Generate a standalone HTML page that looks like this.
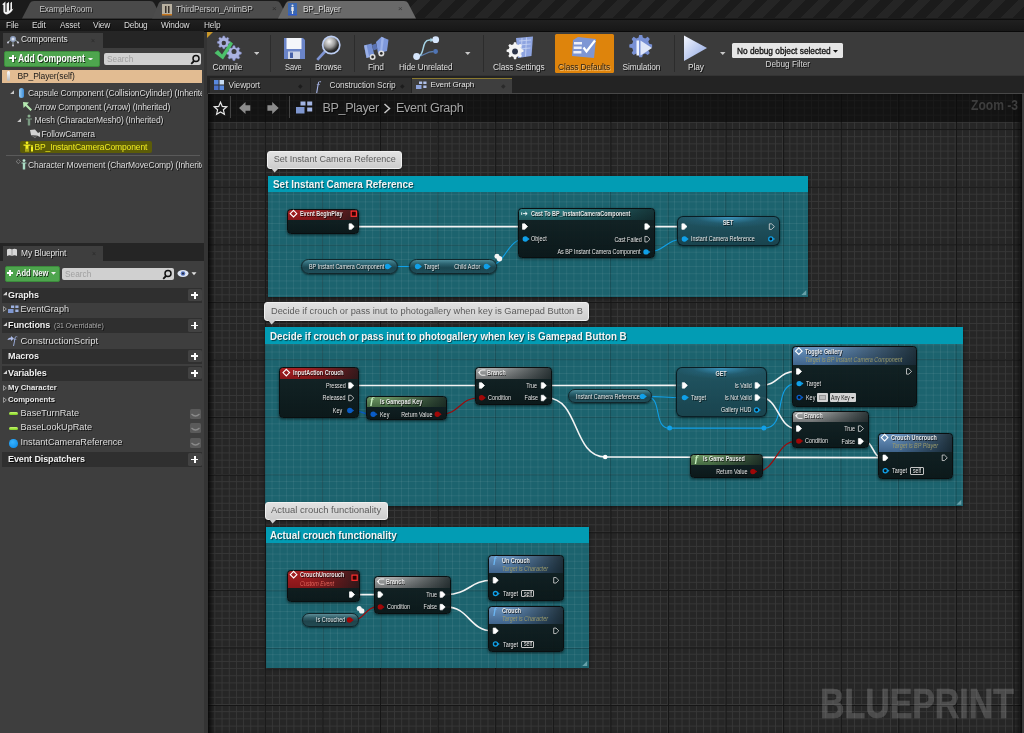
<!DOCTYPE html><html><head><meta charset="utf-8"><title>BP_Player</title><style>
*{box-sizing:border-box;margin:0;padding:0}
html,body{width:1024px;height:733px;overflow:hidden;background:#2b2b2b;font-family:"Liberation Sans",sans-serif;color:#d8d8d8;font-size:10px}
.a{position:absolute}
.t{position:absolute;white-space:nowrap;line-height:1;text-shadow:1px 1px 0 rgba(0,0,0,.75)}
.ns{text-shadow:none}
#topbar{left:0;top:0;width:1024px;height:19px;background:#1b1b1b}
#stripes{left:405px;top:0;width:619px;height:18px;background:repeating-linear-gradient(135deg,#1b1b1b 0 8.85px,#252525 8.85px 17.7px)}
#menubar{left:0;top:18.5px;width:1024px;height:13.5px;background:linear-gradient(#202020,#171717);border-top:1px solid #0e0e0e;border-bottom:1.2px solid #0a0a0a}
#left{left:0;top:31px;width:204px;height:702px;background:#3e3e3e}
#graph{left:208px;top:94px;width:813.5px;height:639px;overflow:hidden;background-color:#262626;box-shadow:inset 6px 0 5px -3px rgba(0,0,0,.8),inset -6px 0 5px -3px rgba(0,0,0,.8);
 background-image:
 linear-gradient(90deg,#151515 0 1.2px,transparent 1.2px),
 linear-gradient(180deg,#151515 0 1.2px,transparent 1.2px),
 linear-gradient(90deg,#373737 0 1px,transparent 1px),
 linear-gradient(180deg,#373737 0 1px,transparent 1px);
 background-size:57.6px 57.6px,57.6px 57.6px,7.2px 7.2px,7.2px 7.2px;
 background-position:-0.8px 0,0 35.1px,-0.8px 0,0 -0.9px}
</style></head><body>
<div id="root" style="position:absolute;left:0;top:0;width:1024px;height:733px;will-change:transform">
<!-- ===== top tab bar ===== -->
<div class="a" id="topbar"></div>
<div class="a" id="stripes"></div>
<svg class="a" style="left:0;top:0" width="430" height="19" viewBox="0 0 430 19">
  <path d="M22 18.5 L30 3 Q31 1 34 1 L150 1 Q153 1 154 3 L162 18.5 H22 Z" fill="#4a4a4a"/>
  <path d="M152 18.5 L158 5 Q159 1 163 1 L276 1 Q279 1 280 3 L288 18.5 Z" fill="#4c4c4c"/>
  <path d="M278 18.5 L286 3 Q287 1 290 1 L404 1 Q407 1 408 3 L416 18.5 Z" fill="#696969"/>
  <!-- UE logo -->
  <path d="M2.2 4.2 C3.6 3.4 4.6 2.4 5.4 1.6 L5.4 11.2 C5.4 12 6 12.4 6.6 11.8 L6.6 3.6 C7.4 3.2 8.4 2.4 9 1.8 L9 11 C9.6 10.6 10 10.2 10.4 9.6 L10.4 3 C11 2.6 11.6 2.2 12 1.8 L12 9.4 C12.6 9.2 13 8.8 13.4 8.4 C12.6 10.8 10.4 13.2 7 14.4 C5 14.2 3.4 13 3.4 11.4 L3.4 5 C3 4.8 2.6 4.6 2.2 4.2 Z" fill="#f2f2f2"/>
  <!-- anim bp icon -->
  <rect x="162" y="4" width="10" height="11" fill="#b8b0a0"/><rect x="162" y="14" width="10" height="1.5" fill="#c8761c"/>
  <path d="M165 6 h1.5 v7 h-1.5z M168 6 h1.5 v7 h-1.5z" fill="#3a332c"/>
  <!-- bp player icon -->
  <rect x="288" y="3" width="9" height="12" fill="#3a66b0"/><rect x="288" y="14" width="9" height="1.5" fill="#2d5bd0"/>
  <path d="M292.5 4.5 a1 1 0 1 1 0 2 a1 1 0 1 1 0 -2 M291.3 7 h2.4 v4 h-.6 v3 h-1.2 v-3 h-.6z" fill="#e8e8e8"/>
</svg>
<div class="t" style="left:39.5px;top:4.5px;font-size:8.3px;letter-spacing:-.18px;color:#c4c4c4">ExampleRoom</div>
<div class="t" style="left:176px;top:4.5px;font-size:8.3px;letter-spacing:-.18px;color:#cacaca">ThirdPerson_AnimBP</div>
<div class="t" style="left:303px;top:4.5px;font-size:8.3px;letter-spacing:-.18px;color:#dadada">BP_Player</div>
<div class="t ns" style="left:272px;top:5px;font-size:8px;color:#2c2c2c">×</div>
<div class="t ns" style="left:398px;top:5px;font-size:8px;color:#3c3c3c">×</div>

<!-- ===== menu bar ===== -->
<div class="a" id="menubar"></div>
<div class="t" style="left:6px;top:21px;font-size:8.3px;letter-spacing:-.18px;color:#dcdcdc">File</div>
<div class="t" style="left:32px;top:21px;font-size:8.3px;letter-spacing:-.18px;color:#dcdcdc">Edit</div>
<div class="t" style="left:60px;top:21px;font-size:8.3px;letter-spacing:-.18px;color:#dcdcdc">Asset</div>
<div class="t" style="left:93px;top:21px;font-size:8.3px;letter-spacing:-.18px;color:#dcdcdc">View</div>
<div class="t" style="left:124px;top:21px;font-size:8.3px;letter-spacing:-.18px;color:#dcdcdc">Debug</div>
<div class="t" style="left:161px;top:21px;font-size:8.3px;letter-spacing:-.18px;color:#dcdcdc">Window</div>
<div class="t" style="left:204px;top:21px;font-size:8.3px;letter-spacing:-.18px;color:#dcdcdc">Help</div>

<!-- ===== left panel ===== -->
<div class="a" id="left"></div>
<div class="a" style="left:0;top:31px;width:204px;height:17px;background:#252525"></div>
<div class="a" style="left:3px;top:33px;width:100px;height:15px;background:#3e3e3e"></div>
<svg class="a" style="left:6px;top:34px" width="14" height="13" viewBox="0 0 14 13"><circle cx="7" cy="5" r="3" fill="#8fa0c0"/><circle cx="7" cy="5" r="1.5" fill="#d8e0f0"/><path d="M2 8 l3-2 M12 8 l-3-2 M7 8 v3" stroke="#9aa" stroke-width="1"/><circle cx="2" cy="8.5" r="1" fill="#ccd"/><circle cx="12" cy="8.5" r="1" fill="#ccd"/><circle cx="7" cy="11.5" r="1" fill="#ccd"/></svg>
<div class="t" style="left:21px;top:35px;font-size:8.4px;letter-spacing:-.1px;color:#e0e0e0">Components</div>
<div class="t ns" style="left:91px;top:37px;font-size:7px;color:#2a2a2a">×</div>
<!-- add component -->
<div class="a" style="left:4px;top:51px;width:96px;height:16px;background:#4ea54e;border-radius:2px;border:1px solid #3b8b3b"></div>
<div class="a" style="left:9px;top:57.4px;width:7.4px;height:2.1px;background:#fff;box-shadow:1px 1px 0 rgba(0,0,0,.4)"></div><div class="a" style="left:11.65px;top:54.7px;width:2.1px;height:7.5px;background:#fff;box-shadow:1px 1px 0 rgba(0,0,0,.4)"></div><div class="t" style="left:18.3px;top:54px;font-size:10.4px;font-weight:bold;color:#fff;transform-origin:0 50%;transform:scaleX(.828)">Add Component</div><svg class="a" style="left:88.3px;top:57.6px" width="5" height="2.8" viewBox="0 0 5 2.8"><path d="M0 0 H5 L2.5 2.8Z" fill="#f0f0f0"/></svg>
<!-- search -->
<div class="a" style="left:104px;top:53px;width:97px;height:12px;background:#d0d0d0;border-radius:2px"></div>
<div class="t ns" style="left:107px;top:54.5px;font-size:8.3px;color:#a0a0a0">Search</div>
<svg class="a" style="left:190px;top:54px" width="11" height="11" viewBox="0 0 11 11"><circle cx="6" cy="4.5" r="3" fill="none" stroke="#111" stroke-width="1.5"/><path d="M4 7 L1.2 9.8" stroke="#111" stroke-width="1.8"/></svg>
<!-- self row -->
<div class="a" style="left:2px;top:70px;width:200px;height:13px;background:#e2bc92"></div>
<div class="a" style="left:7px;top:71px;width:3px;height:10px;background:linear-gradient(#fff,#bbb);border-radius:1.5px"></div>
<div class="t ns" style="left:17.5px;top:71.5px;font-size:8.5px;letter-spacing:-.12px;color:#1a1a1a">BP_Player(self)</div>
<!-- tree -->
<div class="a" style="left:0;top:86px;width:202px;height:90px;overflow:hidden">
<svg class="a" style="left:10.3px;top:4.2px" width="4.2" height="4.2" viewBox="0 0 4.2 4.2"><path d="M4.2 0 V4.2 H0Z" fill="#c8c8c8"/></svg>
<div class="a" style="left:19px;top:2px;width:5px;height:10px;border-radius:2.5px;background:linear-gradient(90deg,#9fd0f4,#3c8cd8)"></div>
<div class="t" style="left:28px;top:3px;font-size:8.5px;letter-spacing:-.12px;color:#dcdcdc">Capsule Component (CollisionCylinder) (Inherited)</div>
<svg class="a" style="left:22px;top:15px" width="11" height="10" viewBox="0 0 11 10"><path d="M1 1 L7 1.5 L5 3.5 L10 8.5 L8.5 10 L3.5 5 L1.5 7 Z" fill="#b4e8b0"/></svg>
<div class="t" style="left:34.5px;top:16.5px;font-size:8.5px;letter-spacing:-.12px;color:#dcdcdc">Arrow Component (Arrow) (Inherited)</div>
<svg class="a" style="left:17px;top:31.6px" width="4.2" height="4.2" viewBox="0 0 4.2 4.2"><path d="M4.2 0 V4.2 H0Z" fill="#c8c8c8"/></svg>
<svg class="a" style="left:25px;top:28px" width="8" height="12" viewBox="0 0 8 12"><circle cx="4" cy="2" r="1.5" fill="#8ab090"/><path d="M1 4.5 h6 v1 h-1.8 v6 h-2.4 v-6 h-1.8z" fill="#7a9a82"/></svg>
<div class="t" style="left:34.5px;top:30px;font-size:8.5px;letter-spacing:-.12px;color:#dcdcdc">Mesh (CharacterMesh0) (Inherited)</div>
<svg class="a" style="left:29px;top:43px" width="12" height="10" viewBox="0 0 12 10"><path d="M1 1 L6 0.5 L9 4 L11 3 L11 8 L8 6.5 L6 9 L2 6 Z" fill="#d4d4d4"/><path d="M2 6 L6 9 L8 6.5" fill="#555"/></svg>
<div class="t" style="left:41.5px;top:43.5px;font-size:8.5px;letter-spacing:-.12px;color:#dcdcdc">FollowCamera</div>
<div class="a" style="left:20px;top:55px;width:132px;height:12px;background:#5c5c08;border-radius:2px;filter:blur(.6px)"></div>
<svg class="a" style="left:23px;top:55px" width="11" height="11" viewBox="0 0 11 11"><circle cx="4" cy="1.8" r="1.4" fill="#f4f020"/><path d="M0.5 3.5 h7 v1.2 h-2 v6 h-1 v-3 h-1 v3 h-1 v-6 h-2z" fill="#f4f020"/><path d="M8 6 h2 v4.5 h-2z" fill="#f4f020"/><circle cx="9" cy="5" r=".9" fill="#f4f020"/></svg>
<div class="t ns" style="left:34.5px;top:57px;font-size:8.5px;letter-spacing:-.12px;color:#f0ec20">BP_InstantCameraComponent</div>
<div class="a" style="left:6px;top:68.7px;width:194px;height:1px;background:#5a5a5a"></div>
<div class="t ns" style="left:16px;top:72px;font-size:6px;color:#c0c0c0">◇</div>
<svg class="a" style="left:21px;top:73px" width="6" height="11" viewBox="0 0 6 11"><circle cx="3" cy="1.6" r="1.4" fill="#b8e8d0"/><path d="M0.5 3.6 h5 v1 h-1.3 v6 h-2.4 v-6 h-1.3z" fill="#a8dcc4"/></svg>
<div class="t" style="left:28px;top:75px;font-size:8.5px;letter-spacing:-.12px;color:#dcdcdc">Character Movement (CharMoveComp) (Inherited)</div>
</div>
<!-- ===== my blueprint panel ===== -->
<div class="a" style="left:0;top:242.5px;width:204px;height:18px;background:#252525"></div>
<div class="a" style="left:3px;top:246px;width:100px;height:15px;background:#3e3e3e"></div>
<svg class="a" style="left:7px;top:248px" width="10" height="9" viewBox="0 0 10 9"><path d="M0 1.5 Q2.5 0 5 1.5 Q7.5 0 10 1.5 L10 8 Q7.5 6.5 5 8 Q2.5 6.5 0 8 Z" fill="#d8d8d8"/><path d="M5 1.5 V8" stroke="#777" stroke-width=".6"/></svg>
<div class="t" style="left:21px;top:249px;font-size:8.4px;letter-spacing:-.1px;color:#e0e0e0">My Blueprint</div>
<div class="t ns" style="left:92px;top:250px;font-size:7px;color:#2a2a2a">×</div>
<div class="a" style="left:4.5px;top:265.5px;width:55.5px;height:16px;background:#4ea54e;border-radius:2px;border:1px solid #3b8b3b"></div>
<div class="a" style="left:7px;top:272.4px;width:6.2px;height:1.9px;background:#fff"></div><div class="a" style="left:9.15px;top:270.2px;width:1.9px;height:6.2px;background:#fff"></div><div class="t" style="left:16px;top:269px;font-size:9px;font-weight:bold;color:#f4f4f4;transform-origin:0 50%;transform:scaleX(.84)">Add New</div><svg class="a" style="left:50.5px;top:272.2px" width="5" height="2.8" viewBox="0 0 5 2.8"><path d="M0 0 H5 L2.5 2.8Z" fill="#f0f0f0"/></svg>
<div class="a" style="left:61.5px;top:267.5px;width:112.5px;height:12px;background:#d0d0d0;border-radius:2px"></div>
<div class="t ns" style="left:65px;top:269.5px;font-size:8.3px;color:#a0a0a0">Search</div>
<svg class="a" style="left:162px;top:268.5px" width="11" height="11" viewBox="0 0 11 11"><circle cx="6" cy="4.5" r="3" fill="none" stroke="#111" stroke-width="1.5"/><path d="M4 7 L1.2 9.8" stroke="#111" stroke-width="1.8"/></svg>
<svg class="a" style="left:177px;top:269px" width="22" height="9" viewBox="0 0 22 9"><ellipse cx="6" cy="4.5" rx="5.5" ry="3.4" fill="#dfe6f4"/><circle cx="6" cy="4.5" r="2.3" fill="#5878c0"/><circle cx="6" cy="4.5" r="1" fill="#223"/><path d="M14.5 3.3 h5 l-2.5 3z" fill="#e0e0e0"/></svg>
<div class="a" style="left:2px;top:287.5px;width:200px;height:15px;background:#2f2f2f"></div><div class="a" style="left:188px;top:288.5px;width:13.5px;height:12.5px;background:#424242;border-radius:1.5px"></div><div class="a" style="left:191.2px;top:294.1px;width:7px;height:1.8px;background:#fff"></div><div class="a" style="left:193.8px;top:291.5px;width:1.8px;height:7px;background:#fff"></div><svg class="a" style="left:2.7px;top:291.4px" width="4.2" height="4.2" viewBox="0 0 4.2 4.2"><path d="M4.2 0 V4.2 H0Z" fill="#d0d0d0"/></svg><div class="t" style="left:8px;top:290.7px;font-size:9px;font-weight:bold;letter-spacing:-.1px;color:#f0f0f0">Graphs</div>
<div class="a" style="left:2px;top:318px;width:200px;height:15px;background:#2f2f2f"></div><div class="a" style="left:188px;top:319px;width:13.5px;height:12.5px;background:#424242;border-radius:1.5px"></div><div class="a" style="left:191.2px;top:324.6px;width:7px;height:1.8px;background:#fff"></div><div class="a" style="left:193.8px;top:322.0px;width:1.8px;height:7px;background:#fff"></div><svg class="a" style="left:2.7px;top:321.9px" width="4.2" height="4.2" viewBox="0 0 4.2 4.2"><path d="M4.2 0 V4.2 H0Z" fill="#d0d0d0"/></svg><div class="t" style="left:8px;top:321.2px;font-size:9px;font-weight:bold;letter-spacing:-.1px;color:#f0f0f0">Functions<span style="font-weight:normal;font-size:6.9px;color:#aaa;letter-spacing:0"> &nbsp;(31 Overridable)</span></div>
<div class="a" style="left:2px;top:348.7px;width:200px;height:15px;background:#2f2f2f"></div><div class="a" style="left:188px;top:349.7px;width:13.5px;height:12.5px;background:#424242;border-radius:1.5px"></div><div class="a" style="left:191.2px;top:355.3px;width:7px;height:1.8px;background:#fff"></div><div class="a" style="left:193.8px;top:352.7px;width:1.8px;height:7px;background:#fff"></div><div class="t" style="left:8px;top:351.9px;font-size:9px;font-weight:bold;letter-spacing:-.1px;color:#f0f0f0">Macros</div>
<div class="a" style="left:2px;top:365.8px;width:200px;height:15px;background:#2f2f2f"></div><div class="a" style="left:188px;top:366.8px;width:13.5px;height:12.5px;background:#424242;border-radius:1.5px"></div><div class="a" style="left:191.2px;top:372.40000000000003px;width:7px;height:1.8px;background:#fff"></div><div class="a" style="left:193.8px;top:369.8px;width:1.8px;height:7px;background:#fff"></div><svg class="a" style="left:2.7px;top:369.7px" width="4.2" height="4.2" viewBox="0 0 4.2 4.2"><path d="M4.2 0 V4.2 H0Z" fill="#d0d0d0"/></svg><div class="t" style="left:8px;top:369.0px;font-size:9px;font-weight:bold;letter-spacing:-.1px;color:#f0f0f0">Variables</div>
<div class="a" style="left:2px;top:451.8px;width:200px;height:15.5px;background:#2f2f2f"></div><div class="a" style="left:188px;top:452.8px;width:13.5px;height:13.0px;background:#424242;border-radius:1.5px"></div><div class="a" style="left:191.2px;top:458.65000000000003px;width:7px;height:1.8px;background:#fff"></div><div class="a" style="left:193.8px;top:456.05px;width:1.8px;height:7px;background:#fff"></div><div class="t" style="left:8px;top:455.0px;font-size:9px;font-weight:bold;letter-spacing:-.1px;color:#f0f0f0">Event Dispatchers</div>
<svg class="a" style="left:2.6px;top:306.3px" width="4" height="6" viewBox="0 0 4 6"><path d="M.5 .6 L3.4 3 L.5 5.4Z" fill="none" stroke="#b0b0b0" stroke-width=".8"/></svg>
<svg class="a" style="left:8px;top:305px" width="11" height="9" viewBox="0 0 11 9"><rect x="0" y="4" width="5.5" height="4" fill="#7f97d0"/><rect x="3" y="0.5" width="3.2" height="2.5" fill="#9db1e0"/><rect x="7.3" y="0.5" width="3.2" height="2.5" fill="#9db1e0"/><rect x="7.3" y="4.5" width="3.2" height="2.5" fill="#9db1e0"/></svg>
<div class="t" style="left:20.5px;top:305px;font-size:9.1px;color:#dcdcdc">EventGraph</div>
<svg class="a" style="left:7px;top:335px" width="12" height="12" viewBox="0 0 12 12"><path d="M0.5 5 Q1 2.5 4 2.5 L4 1 L7 3.5 L4 6 L4 4.5 Q2 4.3 0.5 5Z" fill="#aebce8"/></svg>
<div class="t ns" style="left:13px;top:335px;font-size:11px;font-style:italic;font-family:'Liberation Serif',serif;color:#9fb0e0">f</div>
<div class="t" style="left:20.5px;top:336px;font-size:9.5px;color:#dcdcdc">ConstructionScript</div>
<svg class="a" style="left:2.6px;top:385.3px" width="4" height="6" viewBox="0 0 4 6"><path d="M.5 .6 L3.4 3 L.5 5.4Z" fill="none" stroke="#b0b0b0" stroke-width=".8"/></svg>
<div class="t" style="left:8px;top:384px;font-size:7.7px;font-weight:bold;color:#e8e8e8">My Character</div>
<svg class="a" style="left:2.6px;top:397.3px" width="4" height="6" viewBox="0 0 4 6"><path d="M.5 .6 L3.4 3 L.5 5.4Z" fill="none" stroke="#b0b0b0" stroke-width=".8"/></svg>
<div class="t" style="left:8px;top:396.2px;font-size:7.7px;font-weight:bold;color:#e8e8e8">Components</div>
<div class="a" style="left:8.5px;top:412.3px;width:9.5px;height:3.2px;border-radius:1.6px;background:linear-gradient(#c8f870,#7ed020)"></div>
<div class="t" style="left:20.5px;top:409.0px;font-size:9.15px;color:#dcdcdc">BaseTurnRate</div>
<div class="a" style="left:189.5px;top:409.0px;width:11px;height:10px;background:#5a5a5a;border-radius:1.5px"></div>
<svg class="a" style="left:190.5px;top:412.8px" width="9" height="5" viewBox="0 0 9 5"><path d="M0.5 1 Q4.5 5 8.5 1" fill="none" stroke="#8a8a8a" stroke-width="1.3"/></svg>
<div class="a" style="left:8.5px;top:426.5px;width:9.5px;height:3.2px;border-radius:1.6px;background:linear-gradient(#c8f870,#7ed020)"></div>
<div class="t" style="left:20.5px;top:423.2px;font-size:9.15px;color:#dcdcdc">BaseLookUpRate</div>
<div class="a" style="left:189.5px;top:423.2px;width:11px;height:10px;background:#5a5a5a;border-radius:1.5px"></div>
<svg class="a" style="left:190.5px;top:427px" width="9" height="5" viewBox="0 0 9 5"><path d="M0.5 1 Q4.5 5 8.5 1" fill="none" stroke="#8a8a8a" stroke-width="1.3"/></svg>
<div class="a" style="left:9px;top:439px;width:8.5px;height:8.5px;border-radius:50%;background:radial-gradient(circle at 40% 35%,#38b4ff,#0684e4)"></div>
<div class="t" style="left:20.5px;top:438.2px;font-size:9.15px;color:#dcdcdc">InstantCameraReference</div>
<div class="a" style="left:189.5px;top:438.2px;width:11px;height:10px;background:#5a5a5a;border-radius:1.5px"></div>
<svg class="a" style="left:190.5px;top:442px" width="9" height="5" viewBox="0 0 9 5"><path d="M0.5 1 Q4.5 5 8.5 1" fill="none" stroke="#8a8a8a" stroke-width="1.3"/></svg>
<!-- ===== toolbar ===== -->
<div class="a" style="left:203.5px;top:32px;width:820.5px;height:701px;background:#343434"></div>
<div class="a" style="left:207px;top:32px;width:817px;height:42.5px;background:#3b3b3b"></div>
<svg class="a" style="left:207px;top:32px" width="6" height="6" viewBox="0 0 6 6"><path d="M0 0 H6 L0 6Z" fill="#c9972a"/></svg>
<!-- separators -->
<div class="a" style="left:270px;top:35px;width:1px;height:37px;background:#2c2c2c"></div>
<div class="a" style="left:353.5px;top:35px;width:1px;height:37px;background:#2c2c2c"></div>
<div class="a" style="left:483px;top:35px;width:1px;height:37px;background:#2c2c2c"></div>
<div class="a" style="left:673.5px;top:35px;width:1px;height:37px;background:#2c2c2c"></div>
<!-- class defaults highlight -->
<div class="a" style="left:555px;top:33.7px;width:59px;height:39.3px;background:#de840c;border-radius:1.5px"></div>
<!-- compile icon -->
<svg class="a" style="left:213px;top:34px" width="30" height="28" viewBox="0 0 30 28">
 <g fill="#aab2e0" stroke="#8088c0" stroke-width=".5">
  <path id="g1" d="M10.0 2.0 l1.6 0 l.4 1.6 l1.3 .55 l1.45 -.85 l1.15 1.15 l-.85 1.45 l.55 1.3 l1.6 .4 l0 1.6 l-1.6 .4 l-.55 1.3 l.85 1.45 l-1.15 1.15 l-1.45 -.85 l-1.3 .55 l-.4 1.6 l-1.6 0 l-.4 -1.6 l-1.3 -.55 l-1.45 .85 l-1.15 -1.15 l.85 -1.45 l-.55 -1.3 l-1.6 -.4 l0 -1.6 l1.6 -.4 l.55 -1.3 l-.85 -1.45 l1.15 -1.15 l1.45 .85 l1.3 -.55z"/>
  <g transform="translate(8.5,9.5) scale(1.15)"><path d="M10.0 2.0 l1.6 0 l.4 1.6 l1.3 .55 l1.45 -.85 l1.15 1.15 l-.85 1.45 l.55 1.3 l1.6 .4 l0 1.6 l-1.6 .4 l-.55 1.3 l.85 1.45 l-1.15 1.15 l-1.45 -.85 l-1.3 .55 l-.4 1.6 l-1.6 0 l-.4 -1.6 l-1.3 -.55 l-1.45 .85 l-1.15 -1.15 l.85 -1.45 l-.55 -1.3 l-1.6 -.4 l0 -1.6 l1.6 -.4 l.55 -1.3 l-.85 -1.45 l1.15 -1.15 l1.45 .85 l1.3 -.55z"/></g>
 </g>
 <circle cx="10.8" cy="9" r="2.2" fill="#3b3b3b"/><circle cx="21" cy="17.6" r="2.5" fill="#3b3b3b"/>
 <path d="M1.5 19 L5 16 L9 20.5 L17.5 7.5 L20 9.5 L10 25.5 Z" fill="#4cc06a"/>
</svg>
<div class="t" style="left:212.5px;top:63px;font-size:8.3px;letter-spacing:-.1px;color:#e0e0e0">Compile</div>
<svg class="a" style="left:253.5px;top:51.5px" width="5.5" height="3" viewBox="0 0 5.5 3"><path d="M0 0 H5.5 L2.75 3Z" fill="#c8c8c8"/></svg>
<!-- save icon -->
<svg class="a" style="left:283px;top:37px" width="23" height="23" viewBox="0 0 23 23">
 <path d="M1 1 H20 L22 3 V22 H1Z" fill="#6a84c8"/><rect x="3.5" y="1" width="15" height="11" fill="#f4f6fa"/><rect x="5" y="14.5" width="12" height="7.5" fill="#cfd6e8"/><rect x="7" y="15.5" width="3" height="5.5" fill="#4660a8"/>
</svg>
<div class="t" style="left:285px;top:63px;font-size:8.3px;letter-spacing:-.1px;transform-origin:0 50%;transform:scaleX(.9);color:#e0e0e0">Save</div>
<!-- browse icon -->
<svg class="a" style="left:315px;top:35px" width="27" height="27" viewBox="0 0 27 27">
 <defs><radialGradient id="lens" cx=".38" cy=".3" r=".75"><stop offset="0" stop-color="#f4f4f4"/><stop offset=".45" stop-color="#9a9a9a"/><stop offset=".75" stop-color="#2a2a2a"/><stop offset="1" stop-color="#161616"/></radialGradient></defs>
 <path d="M9 15.5 L1.3 24 L3.2 25.8 L11 17.6Z" fill="#7f95d4"/>
 <circle cx="16.2" cy="10" r="8.6" fill="url(#lens)" stroke="#bccdf2" stroke-width="1.7"/>
</svg>
<div class="t" style="left:315.3px;top:63px;font-size:8.3px;letter-spacing:-.1px;transform-origin:0 50%;transform:scaleX(.985);color:#e0e0e0">Browse</div>
<!-- find icon -->
<svg class="a" style="left:363px;top:36px" width="27" height="25" viewBox="0 0 27 25">
 <path d="M13 6 L18.5 .8 L25.5 3.8 L24 15 L15 17.5Z" fill="#7f99dc"/><path d="M18.5 .8 L21 1.9 L19 16.4 L17 17Z" fill="#a9bdf0" opacity=".7"/>
 <path d="M9 9 L13 7.5 L14.5 13 L10.500 14.5Z" fill="#5a72b2"/>
 <path d="M1 9.5 L8.5 7.5 L11.5 19.5 L3.5 22Z" fill="#7590d4"/><path d="M1 9.5 L3.6 8.8 L6.3 21.2 L3.5 22Z" fill="#a9bdf0" opacity=".7"/>
 <circle cx="9.6" cy="21" r="3" fill="#dedede"/><circle cx="9.6" cy="21" r="1.4" fill="#2a2a2a"/>
 <circle cx="18.3" cy="17.4" r="3" fill="#dedede"/><circle cx="18.3" cy="17.4" r="1.4" fill="#2a2a2a"/>
</svg>
<div class="t" style="left:368px;top:63px;font-size:8.3px;letter-spacing:-.1px;color:#e0e0e0">Find</div>
<!-- hide unrelated icon -->
<svg class="a" style="left:412px;top:35px" width="30" height="26" viewBox="0 0 30 26">
 <path d="M4.5 21.5 C13 21.5 13 16.5 21.5 16.5" fill="none" stroke="#5d7fae" stroke-width="1.3"/>
 <path d="M4.5 21.5 C14 21.5 8.5 5 17.5 5 L20 5" fill="none" stroke="#a6d4e6" stroke-width="1.5"/>
 <path d="M18.5 2.8 L21.5 5 L18.5 7.2Z" fill="#a6d4e6"/>
 <circle cx="23.7" cy="4.7" r="3.4" fill="#d6e6fc"/><circle cx="4.600" cy="21.5" r="3.4" fill="#d6e6fc"/><circle cx="23.6" cy="16.5" r="2.4" fill="#4f74b4"/>
</svg>
<div class="t" style="left:399px;top:63px;font-size:8.3px;letter-spacing:-.1px;transform-origin:0 50%;transform:scaleX(.99);color:#e0e0e0">Hide Unrelated</div>
<svg class="a" style="left:465.3px;top:51.5px" width="5.5" height="3" viewBox="0 0 5.5 3"><path d="M0 0 H5.5 L2.75 3Z" fill="#c8c8c8"/></svg>
<!-- class settings icon -->
<svg class="a" style="left:505px;top:36px" width="30" height="26" viewBox="0 0 30 26">
 <path d="M11 2 L28 0.5 L26.5 20 L13 22Z" fill="#8ea4e0"/><path d="M14 5 L26 4 M13.7 9 L25.7 8 M13.4 13 L25.4 12 M17 2 L16 21 M21.5 1.5 L20.5 20.5" stroke="#c8d4f4" stroke-width=".8"/>
 <g transform="translate(-4.2,3.6) scale(1.32)"><path fill="#f4f4f4" d="M10.0 2.0 l1.6 0 l.4 1.6 l1.3 .55 l1.45 -.85 l1.15 1.15 l-.85 1.45 l.55 1.3 l1.6 .4 l0 1.6 l-1.6 .4 l-.55 1.3 l.85 1.45 l-1.15 1.15 l-1.45 -.85 l-1.3 .55 l-.4 1.6 l-1.6 0 l-.4 -1.6 l-1.3 -.55 l-1.45 .85 l-1.15 -1.15 l.85 -1.45 l-.55 -1.3 l-1.6 -.4 l0 -1.6 l1.6 -.4 l.55 -1.3 l-.85 -1.45 l1.15 -1.15 l1.45 .85 l1.3 -.55z"/></g>
 <circle cx="10.05" cy="15.5" r="2.9" fill="#2c3448"/>
</svg>
<div class="t" style="left:493px;top:63px;font-size:8.3px;letter-spacing:-.1px;color:#e0e0e0">Class Settings</div>
<!-- class defaults icon -->
<svg class="a" style="left:571px;top:36px" width="28" height="24" viewBox="0 0 28 24">
 <path d="M2 4 L7 1 L25 3 L23 22 L1 20Z" fill="#7e96d4"/>
 <path d="M3 6 H11 V8.4 H3Z M2.7 10.5 H10.7 V12.9 H2.7Z M2.4 15 H10.4 V17.4 H2.4Z" fill="#eef0f8"/>
 <path d="M12.5 11.5 L15.5 15.5 L24 4.5" fill="none" stroke="#fff" stroke-width="2.2"/>
</svg>
<div class="t" style="left:558px;top:63px;font-size:8.3px;letter-spacing:-.1px;color:#2c2218;text-shadow:.8px .8px 0 rgba(255,226,180,.6)">Class Defaults</div>
<!-- simulation icon -->
<svg class="a" style="left:627px;top:35px" width="28" height="27" viewBox="0 0 28 27">
 <g transform="translate(-5.5,-4) scale(1.78)"><path fill="#7890d4" d="M10.0 2.0 l1.6 0 l.4 1.6 l1.3 .55 l1.45 -.85 l1.15 1.15 l-.85 1.45 l.55 1.3 l1.6 .4 l0 1.6 l-1.6 .4 l-.55 1.3 l.85 1.45 l-1.15 1.15 l-1.45 -.85 l-1.3 .55 l-.4 1.6 l-1.6 0 l-.4 -1.6 l-1.3 -.55 l-1.45 .85 l-1.15 -1.15 l.85 -1.45 l-.55 -1.3 l-1.6 -.4 l0 -1.6 l1.6 -.4 l.55 -1.3 l-.85 -1.45 l1.15 -1.15 l1.45 .85 l1.3 -.55z"/></g>
 <path d="M9.5 5.5 H12 V20.5 H9.5Z" fill="#eef2fc"/><path d="M13.5 5.5 L25 13 L13.5 20.5Z" fill="#dfe6f8"/>
</svg>
<div class="t" style="left:622.5px;top:63px;font-size:8.3px;letter-spacing:-.1px;color:#e0e0e0">Simulation</div>
<!-- play icon -->
<svg class="a" style="left:683px;top:35px" width="25" height="27" viewBox="0 0 25 27"><defs><linearGradient id="pg" x1="0" y1="0" x2="1" y2="1"><stop offset="0" stop-color="#f4f7ff"/><stop offset="1" stop-color="#8ca4e0"/></linearGradient></defs><path d="M1 0.5 L24 13 L1 26Z" fill="url(#pg)"/></svg>
<div class="t" style="left:688px;top:63px;font-size:8.3px;letter-spacing:-.1px;color:#e0e0e0">Play</div>
<svg class="a" style="left:720.3px;top:51.5px" width="5.5" height="3" viewBox="0 0 5.5 3"><path d="M0 0 H5.5 L2.75 3Z" fill="#c8c8c8"/></svg>
<!-- debug filter -->
<div class="a" style="left:732px;top:43.3px;width:110.5px;height:15px;background:#e6e6e6;border-radius:1.5px"></div>
<div class="t ns" style="left:737px;top:46.5px;font-size:8.3px;color:#111;letter-spacing:0;-webkit-text-stroke:.3px #111">No debug object selected</div><svg class="a" style="left:832.5px;top:49.8px" width="5" height="2.8" viewBox="0 0 5 2.8"><path d="M0 0 H5 L2.5 2.8Z" fill="#111"/></svg>
<div class="t" style="left:765.5px;top:60.5px;font-size:8.2px;color:#d8d8d8">Debug Filter</div>

<!-- ===== graph tabs ===== -->
<div class="a" style="left:207px;top:75.5px;width:817px;height:18.5px;background:#232323"></div>
<div class="a" style="left:210px;top:78px;width:99.5px;height:14.5px;background:#2f2f2f"></div>
<div class="a" style="left:311px;top:78px;width:99.5px;height:14.5px;background:#2f2f2f"></div>
<div class="a" style="left:412px;top:78px;width:100px;height:15px;background:#3e3e3e;border-top:1px solid #8a7a30"></div>
<svg class="a" style="left:214px;top:80px" width="10" height="10" viewBox="0 0 10 10"><rect x="0" y="0" width="4.5" height="4.5" fill="#5a8ae0"/><rect x="5.5" y="0" width="4.5" height="4.5" fill="#c8dcf4"/><rect x="0" y="5.5" width="4.5" height="4.5" fill="#4a70c8"/><rect x="5.500" y="5.5" width="4.500" height="4.500" fill="#5a8ae0"/></svg>
<div class="t" style="left:228.6px;top:81px;font-size:8.3px;letter-spacing:-.1px;color:#dcdcdc">Viewport</div>
<div class="t ns" style="left:298px;top:83px;font-size:6px;color:#1c1c1c">◆</div>
<div class="t ns" style="left:316px;top:78.5px;font-size:13px;font-style:italic;font-family:'Liberation Serif',serif;color:#aab8ec">f</div>
<div class="t" style="left:329.5px;top:81px;font-size:8.3px;letter-spacing:-.1px;color:#dcdcdc">Construction Scrip</div>
<div class="t ns" style="left:400px;top:83px;font-size:6px;color:#1c1c1c">◆</div>
<svg class="a" style="left:416px;top:80.5px" width="11" height="9" viewBox="0 0 11 9"><rect x="0" y="4" width="5.5" height="4" fill="#8ea4dc"/><rect x="3" y="0.5" width="3.2" height="2.5" fill="#b0c0ea"/><rect x="7.3" y="0.5" width="3.2" height="2.5" fill="#b0c0ea"/><rect x="7.3" y="4.5" width="3.2" height="2.5" fill="#b0c0ea"/></svg>
<div class="t" style="left:430.4px;top:81px;font-size:8px;letter-spacing:-.1px;color:#e4e4e4">Event Graph</div>
<div class="t ns" style="left:501px;top:83px;font-size:6px;color:#2a2a2a">◆</div>
<div class="a" style="left:1021.5px;top:94px;width:2.5px;height:639px;background:#3a3a3a"></div>
<div class="a" style="left:207.5px;top:93px;width:816.5px;height:1px;background:#484848"></div>

<style>
.cbody{background-color:#1c636e;box-shadow:0 1px 3px rgba(0,0,0,.5);
 background-image:linear-gradient(90deg,rgba(0,0,0,.22) 0 1.2px,transparent 1.2px),linear-gradient(180deg,rgba(0,0,0,.22) 0 1.2px,transparent 1.2px),linear-gradient(90deg,rgba(255,255,255,.065) 0 1px,transparent 1px),linear-gradient(180deg,rgba(255,255,255,.065) 0 1px,transparent 1px);
 background-size:57.6px 57.6px,57.6px 57.6px,7.2px 7.2px,7.2px 7.2px}
.ctitle{background:#029cb4}
.ctext{font-size:10.9px;font-weight:bold;color:#f4f4f4;transform-origin:0 50%;transform:scaleX(.91);text-shadow:1px 1px 1px rgba(0,0,0,.6)}
.bub{background:linear-gradient(#e2e2e2,#cdcdcd);border-radius:3px;border:1px solid #f0f0f0;box-shadow:0 1px 2px rgba(0,0,0,.5)}
.btext{font-size:9.05px;color:#5c5c5c;text-shadow:none}
.node{background:linear-gradient(180deg,rgba(19,33,35,.95),rgba(11,21,22,.95));border:1px solid #0a0f10;box-shadow:0 1px 3px rgba(0,0,0,.6);overflow:hidden}
.nh{left:0;top:0;width:100%}
.nh.event{background:linear-gradient(90deg,rgba(13,24,26,0) 30%,rgba(13,24,26,.72) 100%),linear-gradient(180deg,#a81f22,#861619)}
.nh.func{background:linear-gradient(90deg,rgba(13,24,26,0) 25%,rgba(13,24,26,.78) 100%),linear-gradient(180deg,#6a93be,#3f648c)}
.nh.pure{background:linear-gradient(90deg,rgba(13,24,26,0) 25%,rgba(13,24,26,.78) 100%),linear-gradient(180deg,#6c9462,#456a42)}
.nh.branch{background:linear-gradient(90deg,rgba(13,24,26,0) 25%,rgba(13,24,26,.78) 100%),linear-gradient(180deg,#a9abab,#717475)}
.nh.cast{background:linear-gradient(90deg,rgba(13,24,26,0) 25%,rgba(13,24,26,.7) 100%),linear-gradient(180deg,#2c7e84,#1d5a5f)}
.pill{border-radius:8px;border:1px solid #12262b;box-shadow:0 1px 2px rgba(0,0,0,.55);background:linear-gradient(180deg,#4d8c9a 0%,#2c6370 30%,#1b4650 60%,#1f4e5a 100%)}
.pill.bool{background:linear-gradient(180deg,#5d8c96 0%,#33606a 30%,#1f444c 60%,#224a52 100%)}
.vnode{border-radius:6px;border:1px solid rgba(9,26,31,.9);box-shadow:0 1px 3px rgba(0,0,0,.55);background:radial-gradient(ellipse 55% 11px at 50% 0,rgba(64,158,204,.85),rgba(40,110,140,.35) 60%,transparent 100%),linear-gradient(180deg,rgba(33,84,97,.95),rgba(25,66,76,.95))}
.nt{text-shadow:.8px .8px 0 rgba(0,0,0,.7)}
#crumb{left:0;top:0;width:814px;height:27.5px;background:rgba(8,8,8,.62)}
</style>
<div class="a" id="graph">
<div class="a cbody" style="left:60.3px;top:81.5px;width:539.50px;height:121.10px;background-position:-61.10px 0,0 -46.40px,-61.10px 0,0 -82.40px"></div>
<div class="a ctitle" style="left:60.3px;top:81.5px;width:539.50px;height:16.5px"></div>
<div class="a cbody" style="left:57.3px;top:233.3px;width:697.50px;height:178.90px;background-position:-58.10px 0,0 -198.20px,-58.10px 0,0 -234.20px"></div>
<div class="a ctitle" style="left:57.3px;top:233.3px;width:697.50px;height:16.9px"></div>
<div class="a cbody" style="left:57.5px;top:432.5px;width:323.20px;height:141.10px;background-position:-58.30px 0,0 -397.40px,-58.30px 0,0 -433.40px"></div>
<div class="a ctitle" style="left:57.5px;top:432.5px;width:323.20px;height:16.6px"></div>
<svg class="a" style="left:0;top:0" width="814" height="639" viewBox="0 0 814 639"><path d="M598.3 196.1 L598.3 201.1 L593.3 201.1Z" fill="#7fb4bc" opacity=".75"/>
<path d="M144 132.6 L314 132.6 " fill="none" stroke="#f4f4f4" stroke-width="1.6" stroke-linecap="round"/>
<path d="M443 132.6 L473 132.6 " fill="none" stroke="#f4f4f4" stroke-width="1.6" stroke-linecap="round"/>
<path d="M180 172.5 L210 172.5 " fill="none" stroke="#10a0e8" stroke-width="1.1" stroke-linecap="round"/>
<path d="M279 172.5 C298.00 172.5 298.00 145 317 145 " fill="none" stroke="#10a0e8" stroke-width="1.1" stroke-linecap="round"/>
<path d="M438.5 157.9 C457.50 157.9 457.50 145 476.5 145 " fill="none" stroke="#10a0e8" stroke-width="1.1" stroke-linecap="round"/>
<path d="M753.3 405.7 L753.3 410.7 L748.3 410.7Z" fill="#7fb4bc" opacity=".75"/>
<path d="M147 291.5 L270.5 291.5 " fill="none" stroke="#f4f4f4" stroke-width="1.6" stroke-linecap="round"/>
<path d="M145.5 316.5 C154.00 316.5 154.00 320.25 162.5 320.25 " fill="none" stroke="#0a5cc8" stroke-width="1.1" stroke-linecap="round"/>
<path d="M232.5 320.25 C251.75 320.25 251.75 303.7 271 303.7 " fill="none" stroke="#a00808" stroke-width="1.1" stroke-linecap="round"/>
<path d="M339 291.5 L473.5 291.4 " fill="none" stroke="#f4f4f4" stroke-width="1.6" stroke-linecap="round"/>
<path d="M339 304 C371.45 304 364.75 363 397.2 363 L674 363.6 " fill="none" stroke="#f4f4f4" stroke-width="1.6" stroke-linecap="round"/>
<path d="M438 302.4 C456.00 302.4 456.00 303.6 474 303.6 " fill="none" stroke="#10a0e8" stroke-width="1.1" stroke-linecap="round"/>
<path d="M438 302.4 C455.44 302.4 444.17 334.1 461.6 334.1 L555.9 334.1 C580.38 334.1 564.02 289.6 588.5 289.6 " fill="none" stroke="#10a0e8" stroke-width="1.1" stroke-linecap="round"/>
<path d="M553 291.4 C570.50 291.4 570.50 277.4 588 277.4 " fill="none" stroke="#f4f4f4" stroke-width="1.6" stroke-linecap="round"/>
<path d="M553 303.6 C570.50 303.6 570.50 334.6 588 334.6 " fill="none" stroke="#f4f4f4" stroke-width="1.6" stroke-linecap="round"/>
<path d="M548 377.6 C568.25 377.6 568.25 347.1 588.5 347.1 " fill="none" stroke="#a00808" stroke-width="1.1" stroke-linecap="round"/>
<path d="M656 347.1 C665.08 347.1 664.92 363.6 674 363.6 " fill="none" stroke="#f4f4f4" stroke-width="1.6" stroke-linecap="round"/>
<path d="M379.2 567.1 L379.2 572.1 L374.2 572.1Z" fill="#7fb4bc" opacity=".75"/>
<path d="M147.5 500.6 L169 500.6 " fill="none" stroke="#f4f4f4" stroke-width="1.6" stroke-linecap="round"/>
<path d="M144.5 526 C157.00 526 157.00 512.9 169.5 512.9 " fill="none" stroke="#a00808" stroke-width="1.1" stroke-linecap="round"/>
<path d="M238 500.6 C261.25 500.6 261.25 486.3 284.5 486.3 " fill="none" stroke="#f4f4f4" stroke-width="1.6" stroke-linecap="round"/>
<path d="M238 512.9 C261.25 512.9 261.25 536.8 284.5 536.8 " fill="none" stroke="#f4f4f4" stroke-width="1.6" stroke-linecap="round"/></svg>
<div class="t ctext" style="left:65.1px;top:84.90px;transform:scaleX(0.911)">Set Instant Camera Reference</div>
<div class="a bub" style="left:59.3px;top:57px;width:134.50px;height:18.00px"></div>
<svg class="a" style="left:63.3px;top:74.40px" width="8" height="5" viewBox="0 0 8 5"><path d="M0 0 H8 L3.6 4.6Z" fill="#d0d0d0"/></svg>
<div class="t btext" style="left:65.7px;top:61.25px;transform-origin:0 50%;transform:scaleX(1.0)">Set Instant Camera Reference</div>
<div class="a node" style="left:78.6px;top:114.5px;width:72.40px;height:25.90px;border-radius:3.5px"><div class="a nh event" style="height:10.3px;border-radius:2.5px 2.5px 0 0"></div></div>
<div class="t nt" style="top:117px;font-size:6.5px;color:#e6e6e6;font-weight:bold;left:92px;transform-origin:0 50%;transform:scaleX(0.835);">Event BeginPlay</div>
<div class="a pill obj" style="left:93px;top:164.7px;width:96.90px;height:15.30px"></div>
<div class="t nt" style="top:170px;font-size:6.5px;color:#e6e6e6;left:100.6px;transform-origin:0 50%;transform:scaleX(0.835);">BP Instant Camera Component</div>
<div class="a pill obj" style="left:200.9px;top:164.7px;width:87.90px;height:15.30px"></div>
<div class="t nt" style="top:170px;font-size:6.5px;color:#e6e6e6;left:216px;transform-origin:0 50%;transform:scaleX(0.835);">Target</div>
<div class="t nt" style="top:170px;font-size:6.5px;color:#e6e6e6;right:541px;transform-origin:100% 50%;transform:scaleX(0.835);">Child Actor</div>
<div class="a node" style="left:309.8px;top:114.4px;width:137.50px;height:50.00px;border-radius:3.5px"><div class="a nh cast" style="height:10.2px;border-radius:2.5px 2.5px 0 0"></div></div>
<div class="t nt" style="top:117px;font-size:6.5px;color:#e6e6e6;font-weight:bold;left:322.5px;transform-origin:0 50%;transform:scaleX(0.835);">Cast To BP_InstantCameraComponent</div>
<div class="t nt" style="top:142px;font-size:6.5px;color:#e6e6e6;left:323.3px;transform-origin:0 50%;transform:scaleX(0.835);">Object</div>
<div class="t nt" style="top:143px;font-size:6.5px;color:#e6e6e6;right:379.8px;transform-origin:100% 50%;transform:scaleX(0.835);">Cast Failed</div>
<div class="t nt" style="top:155px;font-size:6.5px;color:#e6e6e6;right:380.7px;transform-origin:100% 50%;transform:scaleX(0.835);">As BP Instant Camera Component</div>
<div class="a vnode" style="left:468.6px;top:121.9px;width:103.70px;height:30.10px"></div>
<div class="t nt" style="top:126px;font-size:6.5px;color:#e6e6e6;font-weight:bold;left:490.40px;width:60px;text-align:center;transform:scaleX(0.835);">SET</div>
<div class="t nt" style="top:142px;font-size:6.5px;color:#e6e6e6;left:483.2px;transform-origin:0 50%;transform:scaleX(0.835);">Instant Camera Reference</div>
<div class="t ctext" style="left:62.1px;top:236.70px;transform:scaleX(0.8985)">Decide if crouch or pass inut to photogallery when key is Gamepad Button B</div>
<div class="a bub" style="left:56.3px;top:208.4px;width:324.30px;height:18.40px"></div>
<svg class="a" style="left:60.3px;top:226.20px" width="8" height="5" viewBox="0 0 8 5"><path d="M0 0 H8 L3.6 4.6Z" fill="#d0d0d0"/></svg>
<div class="t btext" style="left:62.7px;top:212.85px;transform-origin:0 50%;transform:scaleX(1.022)">Decide if crouch or pass inut to photogallery when key is Gamepad Button B</div>
<div class="a node" style="left:71.4px;top:273.4px;width:79.60px;height:50.30px;border-radius:3.5px"><div class="a nh event" style="height:10.3px;border-radius:2.5px 2.5px 0 0"></div></div>
<div class="t nt" style="top:276px;font-size:6.5px;color:#e6e6e6;font-weight:bold;left:84.8px;transform-origin:0 50%;transform:scaleX(0.835);">InputAction Crouch</div>
<div class="t nt" style="top:289px;font-size:6.5px;color:#e6e6e6;right:676px;transform-origin:100% 50%;transform:scaleX(0.835);">Pressed</div>
<div class="t nt" style="top:301px;font-size:6.5px;color:#e6e6e6;right:676px;transform-origin:100% 50%;transform:scaleX(0.835);">Released</div>
<div class="t nt" style="top:314px;font-size:6.5px;color:#e6e6e6;right:679.5px;transform-origin:100% 50%;transform:scaleX(0.835);">Key</div>
<div class="a node" style="left:158.25px;top:302.4px;width:80.65px;height:24.10px;border-radius:3.5px"><div class="a nh pure" style="height:10px;border-radius:2.5px 2.5px 0 0"></div></div>
<div class="t ns" style="left:162.3px;top:302px;font-family:'Liberation Serif',serif;font-style:italic;font-weight:bold;font-size:10px;color:#c8f0c0">f</div>
<div class="t nt" style="top:305px;font-size:6.5px;color:#e6e6e6;font-weight:bold;left:171.7px;transform-origin:0 50%;transform:scaleX(0.835);">Is Gamepad Key</div>
<div class="t nt" style="top:318px;font-size:6.5px;color:#e6e6e6;left:172.3px;transform-origin:0 50%;transform:scaleX(0.835);">Key</div>
<div class="t nt" style="top:318px;font-size:6.5px;color:#e6e6e6;right:589.5px;transform-origin:100% 50%;transform:scaleX(0.835);">Return Value</div>
<div class="a node" style="left:266.7px;top:273.4px;width:76.90px;height:37.80px;border-radius:3.5px"><div class="a nh branch" style="height:10.3px;border-radius:2.5px 2.5px 0 0"></div></div>
<div class="t nt" style="top:276px;font-size:6.5px;color:#e6e6e6;font-weight:bold;left:279.2px;transform-origin:0 50%;transform:scaleX(0.835);">Branch</div>
<div class="t nt" style="top:289px;font-size:6.5px;color:#e6e6e6;right:484px;transform-origin:100% 50%;transform:scaleX(0.835);">True</div>
<div class="t nt" style="top:301px;font-size:6.5px;color:#e6e6e6;left:280px;transform-origin:0 50%;transform:scaleX(0.835);">Condition</div>
<div class="t nt" style="top:301px;font-size:6.5px;color:#e6e6e6;right:484px;transform-origin:100% 50%;transform:scaleX(0.835);">False</div>
<div class="a pill obj" style="left:359.6px;top:294.6px;width:84.90px;height:14.60px"></div>
<div class="t nt" style="top:300px;font-size:6.5px;color:#e6e6e6;left:367.6px;transform-origin:0 50%;transform:scaleX(0.835);">Instant Camera Reference</div>
<div class="a vnode" style="left:468.2px;top:273.1px;width:90.60px;height:50.30px"></div>
<div class="t nt" style="top:277px;font-size:6.5px;color:#e6e6e6;font-weight:bold;left:483.40px;width:60px;text-align:center;transform:scaleX(0.835);">GET</div>
<div class="t nt" style="top:289px;font-size:6.5px;color:#e6e6e6;right:269.4px;transform-origin:100% 50%;transform:scaleX(0.835);">Is Valid</div>
<div class="t nt" style="top:301px;font-size:6.5px;color:#e6e6e6;left:483.1px;transform-origin:0 50%;transform:scaleX(0.835);">Target</div>
<div class="t nt" style="top:301px;font-size:6.5px;color:#e6e6e6;right:269.4px;transform-origin:100% 50%;transform:scaleX(0.835);">Is Not Valid</div>
<div class="t nt" style="top:313px;font-size:6.5px;color:#e6e6e6;right:270.1px;transform-origin:100% 50%;transform:scaleX(0.835);">Gallery HUD</div>
<div class="a node" style="left:583.6px;top:251.6px;width:125.30px;height:61.10px;border-radius:3.5px"><div class="a nh func" style="height:18.4px;border-radius:2.5px 2.5px 0 0"></div></div>
<div class="t nt" style="top:255px;font-size:6.5px;color:#e6e6e6;font-weight:bold;left:596.9px;transform-origin:0 50%;transform:scaleX(0.835);">Toggle Gallery</div>
<div class="t nt" style="top:263px;font-size:6.5px;color:#9a9a6a;font-style:italic;text-shadow:none;left:596.9px;transform-origin:0 50%;transform:scaleX(0.835);">Target is BP Instant Camera Component</div>
<div class="t nt" style="top:287px;font-size:6.5px;color:#e6e6e6;left:597.6px;transform-origin:0 50%;transform:scaleX(0.835);">Target</div>
<div class="t nt" style="top:301px;font-size:6.5px;color:#e6e6e6;left:597.6px;transform-origin:0 50%;transform:scaleX(0.835);">Key</div>
<div class="a" style="left:608.7px;top:299.2px;width:11.5px;height:8.8px;background:#d4d4d4;border-radius:1px"></div>
<div class="a" style="left:611px;top:301.3px;width:7px;height:4.6px;background:#bcbcbc;border:0.6px solid #999"></div>
<div class="a" style="left:621.7px;top:299.2px;width:26.5px;height:8.8px;background:#d4d4d4;border-radius:1px"></div>
<div class="t nt" style="top:301px;font-size:6.5px;color:#181818;text-shadow:none;left:623.4px;transform-origin:0 50%;transform:scaleX(0.78);">Any Key</div>
<svg class="a" style="left:643.3px;top:302.8px" width="3.4" height="2" viewBox="0 0 3.4 2"><path d="M0 0 H3.4 L1.7 2Z" fill="#222"/></svg>
<div class="a node" style="left:583.6px;top:316.7px;width:77.10px;height:37.80px;border-radius:3.5px"><div class="a nh branch" style="height:10px;border-radius:2.5px 2.5px 0 0"></div></div>
<div class="t nt" style="top:319px;font-size:6.5px;color:#e6e6e6;font-weight:bold;left:596.3px;transform-origin:0 50%;transform:scaleX(0.835);">Branch</div>
<div class="t nt" style="top:332px;font-size:6.5px;color:#e6e6e6;right:166.5px;transform-origin:100% 50%;transform:scaleX(0.835);">True</div>
<div class="t nt" style="top:344px;font-size:6.5px;color:#e6e6e6;left:597.3px;transform-origin:0 50%;transform:scaleX(0.835);">Condition</div>
<div class="t nt" style="top:345px;font-size:6.5px;color:#e6e6e6;right:166.5px;transform-origin:100% 50%;transform:scaleX(0.835);">False</div>
<div class="a node" style="left:482.4px;top:359.8px;width:72.50px;height:24.60px;border-radius:3.5px"><div class="a nh pure" style="height:9.8px;border-radius:2.5px 2.5px 0 0"></div></div>
<div class="t ns" style="left:486.8px;top:360px;font-family:'Liberation Serif',serif;font-style:italic;font-weight:bold;font-size:10px;color:#c8f0c0">f</div>
<div class="t nt" style="top:362px;font-size:6.5px;color:#e6e6e6;font-weight:bold;left:495.3px;transform-origin:0 50%;transform:scaleX(0.835);">Is Game Paused</div>
<div class="t nt" style="top:375px;font-size:6.5px;color:#e6e6e6;right:273.8px;transform-origin:100% 50%;transform:scaleX(0.835);">Return Value</div>
<div class="a node" style="left:670px;top:338.5px;width:74.50px;height:46.20px;border-radius:3.5px"><div class="a nh func" style="height:18px;border-radius:2.5px 2.5px 0 0"></div></div>
<div class="t nt" style="top:341px;font-size:6.5px;color:#e6e6e6;font-weight:bold;left:682.9px;transform-origin:0 50%;transform:scaleX(0.835);">Crouch Uncrouch</div>
<div class="t nt" style="top:349px;font-size:6.5px;color:#9a9a6a;font-style:italic;text-shadow:none;left:683.6px;transform-origin:0 50%;transform:scaleX(0.835);">Target is BP Player</div>
<div class="t nt" style="top:374px;font-size:6.5px;color:#e6e6e6;left:684px;transform-origin:0 50%;transform:scaleX(0.835);">Target</div>
<div class="a" style="left:702px;top:373.4px;width:14.00px;height:7.20px;border:.8px solid #c4c4c4;border-radius:1px"></div>
<div class="t nt" style="top:374px;font-size:6.5px;color:#e6e6e6;left:679.00px;width:60px;text-align:center;transform:scaleX(0.8);">self</div>
<div class="t ctext" style="left:62.3px;top:435.90px;transform:scaleX(0.903)">Actual crouch functionality</div>
<div class="a bub" style="left:56.5px;top:408.3px;width:123.30px;height:17.70px"></div>
<svg class="a" style="left:60.5px;top:425.40px" width="8" height="5" viewBox="0 0 8 5"><path d="M0 0 H8 L3.6 4.6Z" fill="#d0d0d0"/></svg>
<div class="t btext" style="left:62.9px;top:412.40px;transform-origin:0 50%;transform:scaleX(1.048)">Actual crouch functionality</div>
<div class="a node" style="left:78.6px;top:475.7px;width:73.00px;height:32.20px;border-radius:3.5px"><div class="a nh event" style="height:17.6px;border-radius:2.5px 2.5px 0 0"></div></div>
<div class="t nt" style="top:478px;font-size:6.5px;color:#e6e6e6;font-weight:bold;left:91.8px;transform-origin:0 50%;transform:scaleX(0.835);">CrouchUncrouch</div>
<div class="t nt" style="top:487px;font-size:6.5px;color:#e0645a;font-style:italic;text-shadow:none;left:91.8px;transform-origin:0 50%;transform:scaleX(0.835);">Custom Event</div>
<div class="a pill bool" style="left:93.5px;top:518.9px;width:57.40px;height:14.20px"></div>
<div class="t nt" style="top:523px;font-size:6.5px;color:#e6e6e6;left:107.8px;transform-origin:0 50%;transform:scaleX(0.835);">Is Crouched</div>
<div class="a node" style="left:165.5px;top:482.3px;width:77.10px;height:38.20px;border-radius:3.5px"><div class="a nh branch" style="height:10.5px;border-radius:2.5px 2.5px 0 0"></div></div>
<div class="t nt" style="top:485px;font-size:6.5px;color:#e6e6e6;font-weight:bold;left:178px;transform-origin:0 50%;transform:scaleX(0.835);">Branch</div>
<div class="t nt" style="top:498px;font-size:6.5px;color:#e6e6e6;right:584.4px;transform-origin:100% 50%;transform:scaleX(0.835);">True</div>
<div class="t nt" style="top:510px;font-size:6.5px;color:#e6e6e6;left:178.8px;transform-origin:0 50%;transform:scaleX(0.835);">Condition</div>
<div class="t nt" style="top:510px;font-size:6.5px;color:#e6e6e6;right:584.4px;transform-origin:100% 50%;transform:scaleX(0.835);">False</div>
<div class="a node" style="left:280.4px;top:460.8px;width:75.40px;height:46.40px;border-radius:3.5px"><div class="a nh func" style="height:17.6px;border-radius:2.5px 2.5px 0 0"></div></div>
<div class="t ns" style="left:285.3px;top:461px;font-family:'Liberation Serif',serif;font-style:italic;font-weight:bold;font-size:10px;color:#6cb6f2">f</div>
<div class="t nt" style="top:464px;font-size:6.5px;color:#e6e6e6;font-weight:bold;left:293.7px;transform-origin:0 50%;transform:scaleX(0.835);">Un Crouch</div>
<div class="t nt" style="top:472px;font-size:6.5px;color:#9a9a6a;font-style:italic;text-shadow:none;left:293.7px;transform-origin:0 50%;transform:scaleX(0.835);">Target is Character</div>
<div class="t nt" style="top:497px;font-size:6.5px;color:#e6e6e6;left:294.7px;transform-origin:0 50%;transform:scaleX(0.835);">Target</div>
<div class="a" style="left:313.3px;top:496.2px;width:12.90px;height:7.00px;border:.8px solid #c4c4c4;border-radius:1px"></div>
<div class="t nt" style="top:497px;font-size:6.5px;color:#e6e6e6;left:289.75px;width:60px;text-align:center;transform:scaleX(0.8);">self</div>
<div class="a node" style="left:280.4px;top:511.6px;width:75.40px;height:46.10px;border-radius:3.5px"><div class="a nh func" style="height:17.3px;border-radius:2.5px 2.5px 0 0"></div></div>
<div class="t ns" style="left:285.3px;top:512px;font-family:'Liberation Serif',serif;font-style:italic;font-weight:bold;font-size:10px;color:#6cb6f2">f</div>
<div class="t nt" style="top:514px;font-size:6.5px;color:#e6e6e6;font-weight:bold;left:293.7px;transform-origin:0 50%;transform:scaleX(0.835);">Crouch</div>
<div class="t nt" style="top:522px;font-size:6.5px;color:#9a9a6a;font-style:italic;text-shadow:none;left:293.7px;transform-origin:0 50%;transform:scaleX(0.835);">Target is Character</div>
<div class="t nt" style="top:548px;font-size:6.5px;color:#e6e6e6;left:294.7px;transform-origin:0 50%;transform:scaleX(0.835);">Target</div>
<div class="a" style="left:313.3px;top:546.6px;width:12.90px;height:7.00px;border:.8px solid #c4c4c4;border-radius:1px"></div>
<div class="t nt" style="top:547px;font-size:6.5px;color:#e6e6e6;left:289.75px;width:60px;text-align:center;transform:scaleX(0.8);">self</div>
<svg class="a" style="left:0;top:0" width="814" height="639" viewBox="0 0 814 639"><path d="M82.2 119.7 L85.5 116.4 L88.8 119.7 L85.5 123.0Z" fill="none" stroke="#fff" stroke-width="1.1"/>
<path d="M82.2 119.7 L85.5 116.4 L85.5 123.0Z" fill="#fff" opacity=".0"/>
<rect x="143.20000000000002" y="117.10000000000001" width="5.2" height="5.2" fill="#300" stroke="#ff3030" stroke-width="1.2"/>
<path d="M141.10 129.85 H143.40 L146.20 132.60 L143.40 135.35 H141.10 Z" fill="#fff" stroke="#fff" stroke-width=".7" stroke-linejoin="round"/>
<circle cx="179.5" cy="172.5" r="2.7" fill="#10a0e8"/>
<path d="M181.90 171.00 L183.80 172.5 L181.90 174.00Z" fill="#10a0e8"/>
<circle cx="209.6" cy="172.5" r="2.7" fill="#10a0e8"/>
<path d="M212.00 171.00 L213.90 172.5 L212.00 174.00Z" fill="#10a0e8"/>
<circle cx="278.4" cy="172.5" r="2.7" fill="#10a0e8"/>
<path d="M280.80 171.00 L282.70 172.5 L280.80 174.00Z" fill="#10a0e8"/>
<circle cx="289" cy="162.3" r="2.5" fill="#f4f4f4"/><circle cx="291.5" cy="164.70000000000002" r="2.7" fill="#f4f4f4"/>
<path d="M315 119.6 h4 M317.2 118 l2 1.6 l-2 1.6 M313.7 118.3 v2.6" stroke="#fff" stroke-width=".9" fill="none"/>
<path d="M314.50 129.85 H316.80 L319.60 132.60 L316.80 135.35 H314.50 Z" fill="#fff" stroke="#fff" stroke-width=".7" stroke-linejoin="round"/>
<path d="M436.90 129.85 H439.20 L442.00 132.60 L439.20 135.35 H436.90 Z" fill="#fff" stroke="#fff" stroke-width=".7" stroke-linejoin="round"/>
<circle cx="317.3" cy="145" r="2.7" fill="#10a0e8"/>
<path d="M319.70 143.50 L321.60 145 L319.70 146.50Z" fill="#10a0e8"/>
<path d="M436.90 142.45 H439.20 L442.00 145.20 L439.20 147.95 H436.90 Z" fill="none" stroke="#dcdcdc" stroke-width=".8" stroke-linejoin="round"/>
<circle cx="438" cy="157.9" r="2.7" fill="#10a0e8"/>
<path d="M440.40 156.40 L442.30 157.9 L440.40 159.40Z" fill="#10a0e8"/>
<path d="M473.90 129.85 H476.20 L479.00 132.60 L476.20 135.35 H473.90 Z" fill="#fff" stroke="#fff" stroke-width=".7" stroke-linejoin="round"/>
<path d="M561.30 129.85 H563.60 L566.40 132.60 L563.60 135.35 H561.30 Z" fill="none" stroke="#dcdcdc" stroke-width=".8" stroke-linejoin="round"/>
<circle cx="476.4" cy="145" r="2.7" fill="#10a0e8"/>
<path d="M478.80 143.50 L480.70 145 L478.80 146.50Z" fill="#10a0e8"/>
<circle cx="562.8" cy="145" r="2.1" fill="#0c1416" stroke="#10a0e8" stroke-width="1.3"/>
<path d="M565.40 143.70 L567.00 145 L565.40 146.30Z" fill="#10a0e8"/>
<circle cx="397.2" cy="363" r="2.3" fill="#fff"/>
<circle cx="461.6" cy="334.1" r="2.5" fill="#10a0e8"/><circle cx="555.9" cy="334.1" r="2.5" fill="#10a0e8"/>
<path d="M75.0 278.6 L78.3 275.3 L81.6 278.6 L78.3 281.90000000000003Z" fill="none" stroke="#fff" stroke-width="1.1"/>
<path d="M75.0 278.6 L78.3 275.3 L78.3 281.90000000000003Z" fill="#fff" opacity=".0"/>
<path d="M140.70 288.75 H143.00 L145.80 291.50 L143.00 294.25 H140.70 Z" fill="#fff" stroke="#fff" stroke-width=".7" stroke-linejoin="round"/>
<path d="M140.70 301.25 H143.00 L145.80 304.00 L143.00 306.75 H140.70 Z" fill="none" stroke="#dcdcdc" stroke-width=".8" stroke-linejoin="round"/>
<circle cx="141.8" cy="316.5" r="2.7" fill="#0a5cc8"/>
<path d="M144.20 315.00 L146.10 316.5 L144.20 318.00Z" fill="#0a5cc8"/>
<circle cx="165.2" cy="320.25" r="2.7" fill="#0a5cc8"/>
<path d="M167.60 318.75 L169.50 320.25 L167.60 321.75Z" fill="#0a5cc8"/>
<circle cx="229.3" cy="320.25" r="2.7" fill="#a00808"/>
<path d="M231.70 318.75 L233.60 320.25 L231.70 321.75Z" fill="#a00808"/>
<path d="M277.5 276.0 H274.0 Q271.5 276.0 271.5 278.6 Q271.5 281.20000000000005 274.0 281.20000000000005 H277.5" fill="none" stroke="#f0f0f0" stroke-width="1"/>
<path d="M269.9 278.6 L272.1 276.8 L272.1 280.40000000000003Z" fill="#f0f0f0"/>
<path d="M271.40 288.75 H273.70 L276.50 291.50 L273.70 294.25 H271.40 Z" fill="#fff" stroke="#fff" stroke-width=".7" stroke-linejoin="round"/>
<path d="M333.25 288.75 H335.55 L338.35 291.50 L335.55 294.25 H333.25 Z" fill="#fff" stroke="#fff" stroke-width=".7" stroke-linejoin="round"/>
<circle cx="273.6" cy="303.7" r="2.7" fill="#a00808"/>
<path d="M276.00 302.20 L277.90 303.7 L276.00 305.20Z" fill="#a00808"/>
<path d="M333.25 301.25 H335.55 L338.35 304.00 L335.55 306.75 H333.25 Z" fill="#fff" stroke="#fff" stroke-width=".7" stroke-linejoin="round"/>
<circle cx="434.5" cy="302.4" r="2.7" fill="#10a0e8"/>
<path d="M436.90 300.90 L438.80 302.4 L436.90 303.90Z" fill="#10a0e8"/>
<path d="M474.30 288.65 H476.60 L479.40 291.40 L476.60 294.15 H474.30 Z" fill="#fff" stroke="#fff" stroke-width=".7" stroke-linejoin="round"/>
<path d="M547.10 288.65 H549.40 L552.20 291.40 L549.40 294.15 H547.10 Z" fill="#fff" stroke="#fff" stroke-width=".7" stroke-linejoin="round"/>
<circle cx="476.5" cy="303.6" r="2.7" fill="#10a0e8"/>
<path d="M478.90 302.10 L480.80 303.6 L478.90 305.10Z" fill="#10a0e8"/>
<path d="M547.10 300.85 H549.40 L552.20 303.60 L549.40 306.35 H547.10 Z" fill="#fff" stroke="#fff" stroke-width=".7" stroke-linejoin="round"/>
<circle cx="548.6" cy="316" r="2.1" fill="#0c1416" stroke="#10a0e8" stroke-width="1.3"/>
<path d="M551.20 314.70 L552.80 316 L551.20 317.30Z" fill="#10a0e8"/>
<path d="M587.5 257.2 L590.8 253.89999999999998 L594.0999999999999 257.2 L590.8 260.5Z" fill="none" stroke="#fff" stroke-width="1.1"/>
<path d="M587.5 257.2 L590.8 253.89999999999998 L590.8 260.5Z" fill="#fff" opacity=".0"/>
<path d="M588.50 274.65 H590.80 L593.60 277.40 L590.80 280.15 H588.50 Z" fill="#fff" stroke="#fff" stroke-width=".7" stroke-linejoin="round"/>
<path d="M698.50 274.65 H700.80 L703.60 277.40 L700.80 280.15 H698.50 Z" fill="none" stroke="#dcdcdc" stroke-width=".8" stroke-linejoin="round"/>
<circle cx="591.2" cy="289.6" r="2.7" fill="#10a0e8"/>
<path d="M593.60 288.10 L595.50 289.6 L593.60 291.10Z" fill="#10a0e8"/>
<circle cx="591.2" cy="303.4" r="2.1" fill="#0c1416" stroke="#0a5cc8" stroke-width="1.3"/>
<path d="M593.80 302.10 L595.40 303.4 L593.80 304.70Z" fill="#0a5cc8"/>
<path d="M594.5 319.2 H591.0 Q588.5 319.2 588.5 321.8 Q588.5 324.40000000000003 591.0 324.40000000000003 H594.5" fill="none" stroke="#f0f0f0" stroke-width="1"/>
<path d="M586.9 321.8 L589.1 320.0 L589.1 323.6Z" fill="#f0f0f0"/>
<path d="M588.50 331.85 H590.80 L593.60 334.60 L590.80 337.35 H588.50 Z" fill="#fff" stroke="#fff" stroke-width=".7" stroke-linejoin="round"/>
<path d="M650.40 331.85 H652.70 L655.50 334.60 L652.70 337.35 H650.40 Z" fill="none" stroke="#dcdcdc" stroke-width=".8" stroke-linejoin="round"/>
<circle cx="590.8" cy="347.1" r="2.7" fill="#a00808"/>
<path d="M593.20 345.60 L595.10 347.1 L593.20 348.60Z" fill="#a00808"/>
<path d="M650.40 344.55 H652.70 L655.50 347.30 L652.70 350.05 H650.40 Z" fill="#fff" stroke="#fff" stroke-width=".7" stroke-linejoin="round"/>
<circle cx="544.9" cy="377.6" r="2.7" fill="#a00808"/>
<path d="M547.30 376.10 L549.20 377.6 L547.30 379.10Z" fill="#a00808"/>
<path d="M673.3000000000001 343.6 L676.6 340.3 L679.9 343.6 L676.6 346.90000000000003Z" fill="none" stroke="#fff" stroke-width="1.1"/>
<path d="M673.3000000000001 343.6 L676.6 340.3 L676.6 346.90000000000003Z" fill="#fff" opacity=".0"/>
<path d="M675.00 361.05 H677.30 L680.10 363.80 L677.30 366.55 H675.00 Z" fill="#fff" stroke="#fff" stroke-width=".7" stroke-linejoin="round"/>
<path d="M734.20 361.05 H736.50 L739.30 363.80 L736.50 366.55 H734.20 Z" fill="none" stroke="#dcdcdc" stroke-width=".8" stroke-linejoin="round"/>
<circle cx="677.3" cy="376.8" r="2.1" fill="#0c1416" stroke="#10a0e8" stroke-width="1.3"/>
<path d="M679.90 375.50 L681.50 376.8 L679.90 378.10Z" fill="#10a0e8"/>
<path d="M82.3 480.7 L85.6 477.4 L88.89999999999999 480.7 L85.6 484.0Z" fill="none" stroke="#fff" stroke-width="1.1"/>
<path d="M82.3 480.7 L85.6 477.4 L85.6 484.0Z" fill="#fff" opacity=".0"/>
<rect x="144.0" y="481.09999999999997" width="5.2" height="5.2" fill="#300" stroke="#ff3030" stroke-width="1.2"/>
<path d="M141.50 497.85 H143.80 L146.60 500.60 L143.80 503.35 H141.50 Z" fill="#fff" stroke="#fff" stroke-width=".7" stroke-linejoin="round"/>
<circle cx="141.4" cy="526" r="2.7" fill="#a00808"/>
<path d="M143.80 524.50 L145.70 526 L143.80 527.50Z" fill="#a00808"/>
<circle cx="151.2" cy="514.5" r="2.5" fill="#f4f4f4"/><circle cx="153.7" cy="516.9" r="2.7" fill="#f4f4f4"/>
<path d="M176.3 485.0 H172.8 Q170.3 485.0 170.3 487.6 Q170.3 490.20000000000005 172.8 490.20000000000005 H176.3" fill="none" stroke="#f0f0f0" stroke-width="1"/>
<path d="M168.70000000000002 487.6 L170.9 485.8 L170.9 489.40000000000003Z" fill="#f0f0f0"/>
<path d="M170.00 497.85 H172.30 L175.10 500.60 L172.30 503.35 H170.00 Z" fill="#fff" stroke="#fff" stroke-width=".7" stroke-linejoin="round"/>
<path d="M232.10 497.85 H234.40 L237.20 500.60 L234.40 503.35 H232.10 Z" fill="#fff" stroke="#fff" stroke-width=".7" stroke-linejoin="round"/>
<circle cx="172.3" cy="512.9" r="2.7" fill="#a00808"/>
<path d="M174.70 511.40 L176.60 512.9 L174.70 514.40Z" fill="#a00808"/>
<path d="M232.10 510.35 H234.40 L237.20 513.10 L234.40 515.85 H232.10 Z" fill="#fff" stroke="#fff" stroke-width=".7" stroke-linejoin="round"/>
<path d="M285.20 483.55 H287.50 L290.30 486.30 L287.50 489.05 H285.20 Z" fill="#fff" stroke="#fff" stroke-width=".7" stroke-linejoin="round"/>
<path d="M345.70 483.55 H348.00 L350.80 486.30 L348.00 489.05 H345.70 Z" fill="none" stroke="#dcdcdc" stroke-width=".8" stroke-linejoin="round"/>
<circle cx="287.5" cy="499.6" r="2.1" fill="#0c1416" stroke="#10a0e8" stroke-width="1.3"/>
<path d="M290.10 498.30 L291.70 499.6 L290.10 500.90Z" fill="#10a0e8"/>
<path d="M285.20 534.05 H287.50 L290.30 536.80 L287.50 539.55 H285.20 Z" fill="#fff" stroke="#fff" stroke-width=".7" stroke-linejoin="round"/>
<path d="M345.70 534.05 H348.00 L350.80 536.80 L348.00 539.55 H345.70 Z" fill="none" stroke="#dcdcdc" stroke-width=".8" stroke-linejoin="round"/>
<circle cx="287.5" cy="550" r="2.1" fill="#0c1416" stroke="#10a0e8" stroke-width="1.3"/>
<path d="M290.10 548.70 L291.70 550 L290.10 551.30Z" fill="#10a0e8"/></svg>
<!-- breadcrumb header & overlays -->
<div class="a" id="crumb"></div>
<svg class="a" style="left:5px;top:7px" width="15" height="15" viewBox="0 0 15 15"><path d="M7.5 1.2 L9.3 5.4 L13.8 5.8 L10.4 8.8 L11.4 13.2 L7.5 10.9 L3.6 13.2 L4.6 8.8 L1.2 5.8 L5.7 5.4 Z" fill="none" stroke="#e8e8e8" stroke-width="1.2" stroke-linejoin="miter"/></svg>
<div class="a" style="left:22.3px;top:2px;width:1px;height:22px;background:#444"></div>
<div class="a" style="left:80.5px;top:2px;width:1px;height:22px;background:#444"></div>
<svg class="a" style="left:30px;top:7px" width="46" height="14" viewBox="0 0 46 14"><path d="M1 7 L7.5 1 L7.5 4.3 L12.3 4.3 L12.3 9.7 L7.5 9.7 L7.5 13 Z" fill="#8c8c8c"/><path d="M40.7 7 L34.2 1 L34.2 4.3 L29.4 4.3 L29.4 9.7 L34.2 9.7 L34.2 13 Z" fill="#8c8c8c"/></svg>
<svg class="a" style="left:88px;top:7px" width="17" height="14" viewBox="0 0 17 14"><rect x="0" y="6" width="8.5" height="6.5" fill="#7f97d0"/><rect x="4.5" y="0.5" width="5" height="4" fill="#a3b5e4"/><rect x="11.2" y="0.5" width="5" height="4" fill="#a3b5e4"/><rect x="11.2" y="6.5" width="5" height="4" fill="#a3b5e4"/></svg>
<div class="t" style="left:114.5px;top:8px;font-size:12.6px;letter-spacing:-.35px;color:#a4a4a4">BP_Player</div>
<svg class="a" style="left:175px;top:9px" width="8" height="11" viewBox="0 0 8 11"><path d="M1.5 1 L6.5 5.5 L1.5 10" fill="none" stroke="#c8c8c8" stroke-width="1.5"/></svg>
<div class="t" style="left:188px;top:8px;font-size:12.6px;letter-spacing:-.3px;color:#a4a4a4">Event Graph</div>
<div class="t ns" style="left:762.7px;top:4px;font-size:14.6px;font-weight:bold;color:#3d3d3d;transform-origin:0 50%;transform:scaleX(.83)">Zoom -3</div>
<div class="t ns" style="left:612.2px;top:588px;font-size:43.4px;font-weight:bold;color:#fff;-webkit-text-stroke:.6px #fff;opacity:.17;transform-origin:0 50%;transform:scaleX(.781)">BLUEPRINT</div>
</div>

</div></body></html>
